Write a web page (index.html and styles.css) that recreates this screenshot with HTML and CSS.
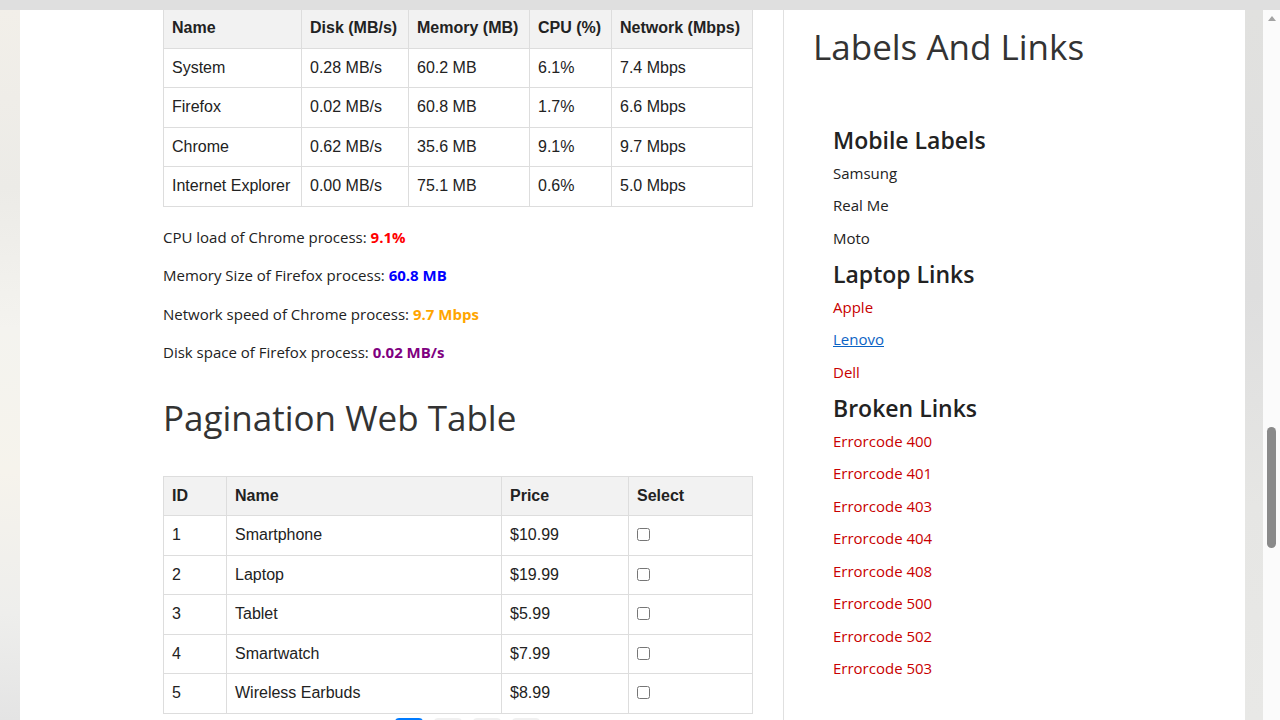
FILE: index.html
```html
<!DOCTYPE html>
<html lang="en">
<head>
<meta charset="utf-8">
<title>Web Tables</title>
<link rel="stylesheet" href="styles.css">
</head>
<body>
<div class="topbar"></div>
<div class="window">
  <div class="bg-left"></div>
  <div class="panel">
    <main class="main">
      <table class="grid grid-stats">
        <colgroup><col style="width:138px"><col style="width:107px"><col style="width:121px"><col style="width:82px"><col style="width:141px"></colgroup>
        <thead>
          <tr><th>Name</th><th>Disk (MB/s)</th><th>Memory (MB)</th><th>CPU (%)</th><th>Network (Mbps)</th></tr>
        </thead>
        <tbody>
          <tr><td>System</td><td>0.28 MB/s</td><td>60.2 MB</td><td>6.1%</td><td>7.4 Mbps</td></tr>
          <tr><td>Firefox</td><td>0.02 MB/s</td><td>60.8 MB</td><td>1.7%</td><td>6.6 Mbps</td></tr>
          <tr><td>Chrome</td><td>0.62 MB/s</td><td>35.6 MB</td><td>9.1%</td><td>9.7 Mbps</td></tr>
          <tr><td>Internet Explorer</td><td>0.00 MB/s</td><td>75.1 MB</td><td>0.6%</td><td>5.0 Mbps</td></tr>
        </tbody>
      </table>
      <div class="facts">
        <p>CPU load of Chrome process: <strong class="v-red">9.1%</strong></p>
        <p>Memory Size of Firefox process: <strong class="v-blue">60.8 MB</strong></p>
        <p>Network speed of Chrome process: <strong class="v-orange">9.7 Mbps</strong></p>
        <p>Disk space of Firefox process: <strong class="v-purple">0.02 MB/s</strong></p>
      </div>
      <h2 class="title title-pagination">Pagination Web Table</h2>
      <table class="grid">
        <colgroup><col style="width:63px"><col style="width:275px"><col style="width:127px"><col style="width:124px"></colgroup>
        <thead>
          <tr><th>ID</th><th>Name</th><th>Price</th><th>Select</th></tr>
        </thead>
        <tbody>
          <tr><td>1</td><td>Smartphone</td><td>$10.99</td><td><input type="checkbox" class="check"></td></tr>
          <tr><td>2</td><td>Laptop</td><td>$19.99</td><td><input type="checkbox" class="check"></td></tr>
          <tr><td>3</td><td>Tablet</td><td>$5.99</td><td><input type="checkbox" class="check"></td></tr>
          <tr><td>4</td><td>Smartwatch</td><td>$7.99</td><td><input type="checkbox" class="check"></td></tr>
          <tr><td>5</td><td>Wireless Earbuds</td><td>$8.99</td><td><input type="checkbox" class="check"></td></tr>
        </tbody>
      </table>
      <div class="pager">
        <button class="page active" aria-label="Page 1"></button>
        <button class="page" aria-label="Page 2"></button>
        <button class="page" aria-label="Page 3"></button>
        <button class="page" aria-label="Page 4"></button>
      </div>
    </main>
    <aside class="side">
      <h2 class="title title-side">Labels And Links</h2>
      <section class="group group-first">
        <h3 class="group-title">Mobile Labels</h3>
        <span class="item">Samsung</span>
        <span class="item">Real Me</span>
        <span class="item">Moto</span>
      </section>
      <section class="group">
        <h3 class="group-title">Laptop Links</h3>
        <a class="item link" href="#apple">Apple</a>
        <a class="item link link-visited" href="#lenovo">Lenovo</a>
        <a class="item link" href="#dell">Dell</a>
      </section>
      <section class="group">
        <h3 class="group-title">Broken Links</h3>
        <a class="item link" href="#400">Errorcode 400</a>
        <a class="item link" href="#401">Errorcode 401</a>
        <a class="item link" href="#403">Errorcode 403</a>
        <a class="item link" href="#404">Errorcode 404</a>
        <a class="item link" href="#408">Errorcode 408</a>
        <a class="item link" href="#500">Errorcode 500</a>
        <a class="item link" href="#502">Errorcode 502</a>
        <a class="item link" href="#503">Errorcode 503</a>
      </section>
    </aside>
  </div>
  <div class="bg-right"></div>
  <div class="scrollbar">
    <span class="arrow-up"></span>
    <span class="thumb"></span>
  </div>
</div>
</body>
</html>
```

FILE: styles.css
```css
* { box-sizing: border-box; }

html, body {
  margin: 0;
  padding: 0;
  height: 720px;
  overflow: hidden;
  background: #e2e2e1;
  font-family: "Open Sans", "Noto Sans", sans-serif;
  color: #222;
}

.topbar {
  height: 10px;
  background: #dfdfdf;
}

.window {
  display: flex;
  height: 710px;
}

.bg-left {
  width: 20px;
  flex: none;
  background: linear-gradient(180deg, #f2efe9 0%, #ecebe7 25%, #f4f3ef 45%, #f6f3ec 65%, #eeeeec 85%, #e4e4e4 100%);
}

.panel {
  width: 1225px;
  flex: none;
  background: #fff;
  display: flex;
  overflow: hidden;
  padding-left: 143px;
}

.main {
  width: 590px;
  flex: none;
}

.grid {
  width: 589px;
  border-collapse: collapse;
  table-layout: fixed;
  font-family: "Liberation Sans", Arial, sans-serif;
  font-size: 16px;
  color: #222;
}

.grid th,
.grid td {
  border: 1px solid #dddddd;
  padding: 10px 8px;
  text-align: left;
  line-height: 18.5px;
  height: 39.5px;
  white-space: nowrap;
}

.grid th {
  background: #f2f2f2;
  font-weight: bold;
}

.grid-stats {
  margin-top: -2px;
}

.check {
  margin: 2px 0 0 0;
  width: 13px;
  height: 13px;
  vertical-align: top;
}

.facts {
  padding-top: 3px;
}

.facts p {
  margin: 16px 0;
  font-size: 15px;
  line-height: 22.5px;
  color: #222;
}

.v-red { color: #ff0000; }
.v-blue { color: #0000ff; }
.v-orange { color: #ffa500; }
.v-purple { color: #800080; }

.title {
  font-weight: 400;
  font-size: 35px;
  line-height: 42px;
  color: #333;
  margin: 0;
}

.title-pagination {
  margin-top: 33px;
  margin-bottom: 37px;
}

.pager {
  display: flex;
  gap: 11px;
  padding-left: 232px;
  margin-top: 4px;
}

.page {
  width: 28px;
  height: 30px;
  border: none;
  border-radius: 4px;
  background: #f0f0f0;
  padding: 0;
}

.page.active {
  background: #007bff;
}

.side {
  margin-left: 30px;
  border-left: 1px solid #e0e0e0;
  padding-left: 29px;
  padding-top: 16px;
  width: 432px;
  flex: none;
}

.group {
  padding-left: 20px;
  display: flex;
  flex-direction: column;
  align-items: flex-start;
}

.group-first {
  margin-top: 57px;
}

.group-title {
  margin: 1px 0 6.5px 0;
  font-size: 23px;
  line-height: 29px;
  font-weight: 600;
  color: #222;
}

.item {
  font-size: 15px;
  line-height: 22.5px;
  margin-bottom: 10px;
  color: #222;
}

.link {
  color: #c80000;
  text-decoration: none;
}

.link-visited {
  color: #0b63c4;
  text-decoration: underline;
}

.bg-right {
  width: 18px;
  flex: none;
  background: linear-gradient(180deg, #e1e1df 0%, #dedede 40%, #e6e6e4 70%, #e8e8e6 100%);
}

.scrollbar {
  width: 17px;
  flex: none;
  background: #fbfbfb;
  display: flex;
  flex-direction: column;
  align-items: center;
}

.arrow-up {
  margin-top: 6px;
  width: 0;
  height: 0;
  border-left: 4px solid transparent;
  border-right: 4px solid transparent;
  border-bottom: 5px solid #a3a3a3;
}

.thumb {
  margin-top: 406px;
  width: 9px;
  height: 121px;
  border-radius: 5px;
  background: #8a8a8a;
}
```
